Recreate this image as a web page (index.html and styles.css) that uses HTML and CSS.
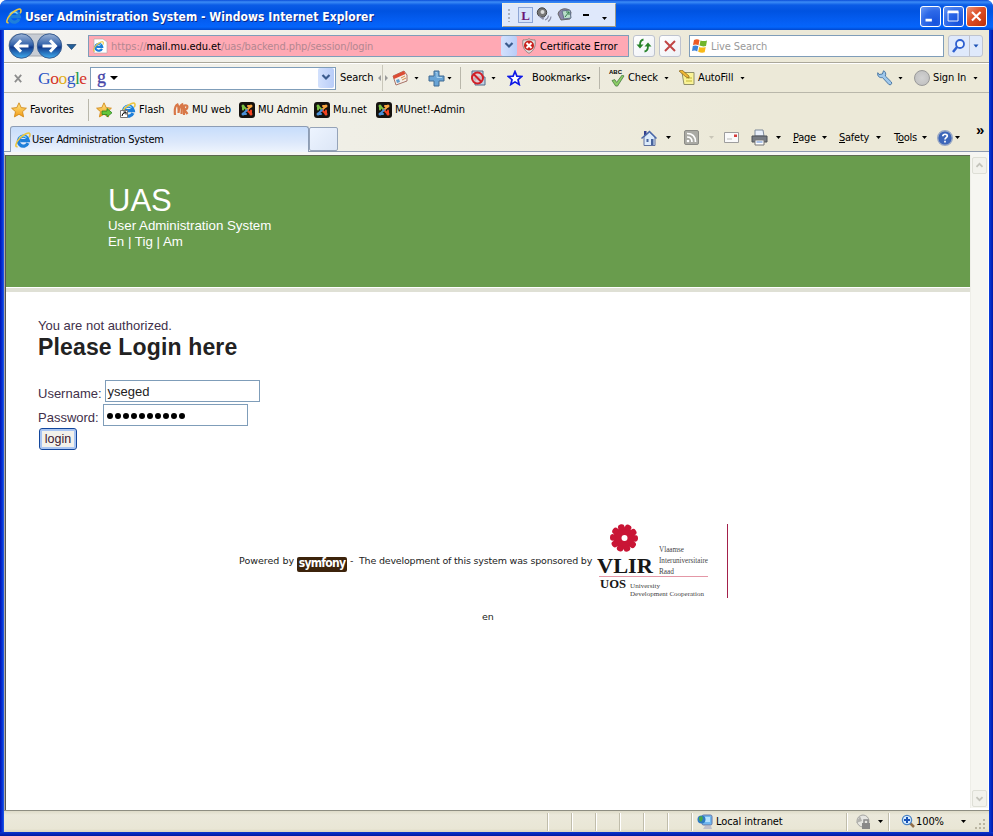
FILE: index.html
```
<!DOCTYPE html>
<html lang="en">
<head>
<meta charset="utf-8">
<title>User Administration System</title>
<link rel="stylesheet" href="styles.css">
</head>
<body>
<svg class="defs" width="0" height="0">
  <defs>
    <linearGradient id="blueBall" x1="0" y1="0" x2="0" y2="1"><stop offset="0" stop-color="#9db4d6"/><stop offset=".45" stop-color="#3564ac"/><stop offset=".55" stop-color="#123a8c"/><stop offset="1" stop-color="#41aef0"/></linearGradient>
    <linearGradient id="gold" x1="0" y1="0" x2="0" y2="1"><stop offset="0" stop-color="#ffe98a"/><stop offset="1" stop-color="#f39a12"/></linearGradient>
    <symbol id="ie" viewBox="0 0 16 16">
      <path d="M13 11.200A5 5 0 1 1 13.400 8.600H5.200" fill="none" stroke="#1e7fda" stroke-width="3.200"/>
      <path d="M4 6.400A4.600 4.600 0 0 1 11.500 5.600" fill="none" stroke="#7fd3fa" stroke-width="1.400"/>
      <path d="M2.600 14.600C-.4 15.600.6 10.400 5 6S14.800-.6 15 2.500c.1 1-.4 2-.9 2.700" fill="none" stroke="#ecc640" stroke-width="1.600"/>
    </symbol>
    <symbol id="star" viewBox="0 0 16 16"><path d="M8 .8l2.200 4.800 5.200.6-3.900 3.500 1.100 5.200L8 12.300l-4.600 2.600 1.100-5.200L.6 6.200l5.200-.6z" fill="url(#gold)" stroke="#d18a1c" stroke-width=".9"/></symbol>
    <symbol id="joomla" viewBox="0 0 16 16">
      <rect width="16" height="16" rx="3" fill="#15120f"/>
      <g fill="none" stroke-width="2" stroke-linecap="round"><path d="M4.500 4.500L8 8" stroke="#7ac143"/><path d="M11.500 4.500L8 8" stroke="#f9a541"/><path d="M11.500 11.500L8 8" stroke="#f44321"/><path d="M4.500 11.500L8 8" stroke="#4a91d8"/><path d="M4 5v2.500" stroke="#7ac143"/><path d="M11 4H9" stroke="#f9a541"/><path d="M12 11V8.500" stroke="#f44321"/><path d="M5 12h2" stroke="#4a91d8"/></g>
      <g><circle cx="4" cy="4" r="1.500" fill="#7ac143"/><circle cx="12" cy="4" r="1.500" fill="#f9a541"/><circle cx="12" cy="12" r="1.500" fill="#f44321"/><circle cx="4" cy="12" r="1.500" fill="#4a91d8"/></g>
    </symbol>
  </defs>
</svg>

<div class="window">
  <header class="titlebar">
    <svg class="i16"><use href="#ie"/></svg>
    <h1 class="title">User Administration System - Windows Internet Explorer</h1>
    <div class="langbar">
      <span class="grip"></span>
      <span class="lang">L</span>
      <svg class="lang-icon" viewBox="0 0 16 16"><circle cx="6" cy="5.500" r="4.700" fill="#777" stroke="#444"/><circle cx="6.500" cy="5" r="2" fill="#ddd"/><path d="M3 9l4 3 1-2M9 13q3-1 3.500-4.500M12 14.500q2.500-1 3-5" fill="none" stroke="#8b8fa8" stroke-width="1.200"/></svg>
      <svg class="lang-icon" viewBox="0 0 16 16"><path d="M1 7C2 1 11 0 14 5l-1 7-9 1z" fill="#8b86a9" stroke="#666"/><path d="M5 4l8-1 1 8-7 1z" fill="#b9dfc9" stroke="#63708b"/><path d="M8 10l4-5M9 5h3v3" stroke="#347b4c" fill="none"/></svg>
      <span class="lang-min"></span>
      <span class="arrow"></span>
    </div>
    <span></span>
    <span class="cap"><svg viewBox="0 0 21 21"><path d="M5 14.500h7" stroke="#fff" stroke-width="3"/></svg></span>
    <span class="cap"><svg viewBox="0 0 21 21"><path d="M4.500 5.500h11v10h-11z" fill="none" stroke="#fff"/><path d="M4 5.500h12" stroke="#fff" stroke-width="3"/></svg></span>
    <span class="cap close"><svg viewBox="0 0 21 21"><path d="M5.500 5.500l9.500 9.500M15 5.500L5.500 15" stroke="#fff" stroke-width="2.300"/></svg></span>
  </header>

  <div class="frame">
    <nav class="addressrow">
      <svg class="nav" viewBox="0 0 70 28">
        <rect x="1" y="2" width="52" height="22" rx="11" fill="#c7ccd4" stroke="#a4a8ae"/>
        <g stroke="#395d91"><circle cx="13.500" cy="14" r="12.200" fill="url(#blueBall)"/><circle cx="41.500" cy="14" r="12.200" fill="url(#blueBall)"/></g>
        <path d="M20.500 14H8M13 8.300L7.500 14l5.500 5.700M34.500 14H47M42 8.300l5.500 5.700-5.500 5.700" fill="none" stroke="#fff" stroke-width="3"/>
        <path d="M59 12.500h9l-4.500 5z" fill="#235f9a" stroke="#173f6c" stroke-width=".7"/>
      </svg>
      <div class="address">
        <svg class="pageicon" viewBox="0 0 16 16"><path d="M2 1h9l4 3v11H2z" fill="#fff" stroke="#aaa" stroke-width=".6"/><use href="#ie" x="1" y="3" width="11" height="11"/></svg>
        <span class="url ui">https://<b>mail.mu.edu.et</b><i>/uas/backend.php/session/login</i></span>
        <span class="drop"><svg viewBox="0 0 16 18"><path d="M4.500 7L8 10.500 11.500 7" fill="none" stroke="#3b5b8d" stroke-width="2.200"/></svg></span>
        <svg class="shield" viewBox="0 0 16 16"><path d="M8 .7c2 1.300 4 1.300 6 1.200 1 6-.6 10.500-6 13.500C2.600 12.400 1 7.900 2 1.900c2 .1 4 .1 6-1.200z" fill="#dedede" stroke="#9a8585"/><circle cx="8" cy="7.500" r="5" fill="#c7201c"/><path d="M5.500 5l5 5m0-5l-5 5" stroke="#fff" stroke-width="2"/></svg>
        <span class="ui cert">Certificate Error</span>
      </div>
      <span class="btn"><svg viewBox="0 0 20 20"><path d="M9.500 3.500Q6 4 6 9v1M10.500 15.500q3.500-.5 3.500-5.500V9" fill="none" stroke="#27832a" stroke-width="1.800"/><path d="M2.500 8.500h7L6 12.500zM10.500 10.500h7L14 6.500z" fill="#27832a"/></svg></span>
      <span class="btn"><svg viewBox="0 0 20 20"><path d="M5 5l10 10M15 5L5 15" stroke="#c04545" stroke-width="2"/></svg></span>
      <div class="search"><svg class="i16" viewBox="0 0 16 16"><path d="M2 2q3-1.500 5.500 0L6.500 7.300Q4 6 1 7z" fill="#ee5a24"/><path d="M8.500 2.600q3 1 6.500 0L14 8q-3 1-6.500-.4z" fill="#70b52c"/><path d="M.8 8q3-1 5.500.3L5.200 13.500Q3 12 0 13z" fill="#3e83d8"/><path d="M7.200 9q3 1 6.500 0l-1 5.300q-3 1-6.500-.5z" fill="#f7b918"/></svg><span class="ui live">Live Search</span></div>
      <div class="btn wide"><svg viewBox="0 0 34 20"><path d="M20.500 0v20" stroke="#bfc3ce"/><circle cx="11" cy="8" r="4" fill="#eef5ff" stroke="#2f60d0" stroke-width="1.800"/><path d="M8 11l-4 5" stroke="#2f60d0" stroke-width="2.500"/><path d="M24.500 8.500h5l-2.500 3z" fill="#1a50b5"/></svg></div>
    </nav>

    <nav class="googlerow">
      <svg class="xicon" viewBox="0 0 10 10"><path d="M1 1l7 8M8 1L1 9" stroke="#8d8d8d" stroke-width="2"/></svg>
      <span class="google"><b>G</b><b>o</b><b>o</b><b>g</b><b>l</b><b>e</b></span>
      <div class="gbox"><span class="g">g</span><span class="arrow big"></span><span class="drop"><svg viewBox="0 0 16 18"><path d="M4.500 7L8 10.500 11.500 7" fill="none" stroke="#3b5b8d" stroke-width="2.200"/></svg></span></div>
      <span class="ui">Search</span>
      <svg class="split" viewBox="0 0 10 26"><path d="M4.500 0v26" stroke="#c9c7ba"/><path d="M0 13l3-3v6zM10 13l-3-3v6z" fill="#999"/></svg>
      <svg class="i16" viewBox="0 0 16 16"><path d="M1 6l11-5 3 4v6L4 15z" fill="#f5eee7" stroke="#a77368"/><path d="M1 6l11-5 1.500 3L2 9z" fill="#dc4c34"/><path d="M4 10l3-1 1 3-3 1z" fill="#649dcc"/><path d="M9 8l4-2m-3 4l4-2" stroke="#d68a45"/></svg>
      <span class="arrow"></span>
      <svg class="i17" viewBox="0 0 17 17"><path d="M6 1h5v5h5v5h-5v5H6v-5H1V6h5z" fill="#69a4d5" stroke="#416b92"/><path d="M7.500 2.500h1.500v5h5" fill="none" stroke="#aad3ee"/></svg>
      <span class="arrow"></span>
      <span class="sep"></span>
      <svg class="i16" viewBox="0 0 16 16"><path d="M2 1h11v8H2zM5 7h10v8H5z" fill="#bfd2e6" stroke="#546c89"/><circle cx="7.500" cy="8" r="5.500" fill="#f4cccc" fill-opacity=".65" stroke="#d11f26" stroke-width="2"/><path d="M3.500 4l8 8" stroke="#d11f26" stroke-width="2"/></svg>
      <span class="arrow"></span>
      <svg class="i16" viewBox="0 0 16 16"><path d="M8 1.500l1.900 4.600 4.800.4-3.700 3.200 1.200 4.800L8 11.900l-4.200 2.600L5 9.700 1.300 6.500l4.800-.4z" fill="#fff" stroke="#0e18e6" stroke-width="1.700"/></svg>
      <span class="ui">Bookmarks</span>
      <span class="arrow"></span>
      <span class="sep"></span>
      <span class="abc">ABC<svg viewBox="0 0 15 13"><path d="M1 6l3-1 2 3L12 0l2 1-7 11H5z" fill="#8bcc65" stroke="#40753a" stroke-width=".8"/></svg></span>
      <span class="ui">Check</span>
      <span class="arrow"></span>
      <svg class="i16" viewBox="0 0 16 16"><path d="M3 2.500h12v12H5z" fill="#faf396" stroke="#90906a"/><path d="M7 8h6m-6 3h6" stroke="#c2b735"/><path d="M0 1l3-1 7 6v2L7 7z" fill="#efb735" stroke="#85631c" stroke-width=".7"/></svg>
      <span class="ui autofill">AutoFill</span>
      <span class="arrow"></span>
      <svg class="i16" viewBox="0 0 16 16"><path d="M6.500.8L5.400 4 2 4.500.8 2.700C0 6 2.500 8.300 5.400 7.500l6.500 7c1.800 1 3.500-.7 2.500-2.500L8.300 6C9.300 3.500 8.500 1.500 6.500.8z" fill="#9fc8ec" stroke="#416f9e" stroke-width=".9"/></svg>
      <span class="arrow"></span>
      <span class="user"></span>
      <span class="ui">Sign In</span>
      <span class="arrow"></span>
    </nav>

    <nav class="favrow">
      <svg class="i16"><use href="#star"/></svg>
      <span class="ui">Favorites</span>
      <span class="sep"></span>
      <svg class="i16" viewBox="0 0 16 16"><use href="#star"/><path d="M6 9h5V6.500l5 4.300-5 4.200v-2.500H6z" fill="#63c63b" stroke="#2c8425" stroke-width=".8"/></svg>
      <svg class="i16" viewBox="0 0 16 16"><use href="#ie"/><path d="M.5 8.500h7v7h-7z" fill="#fff" stroke="#777"/><path d="M2 14q0-3 3.500-3.500M3.500 10H6v2.500" fill="none" stroke="#000"/></svg>
      <span class="ui">Flash</span>
      <svg class="i16" viewBox="0 0 16 16"><path d="M2 13Q1 4 4.500 2.500 6 5 5.500 11 6 4 9 2.500L8.500 12M11 13V3.500Q15.500 2.500 14 6.500L11.500 8l3 4" fill="none" stroke="#d87747" stroke-width="2.200"/></svg>
      <span class="ui">MU web</span>
      <svg class="i16"><use href="#joomla"/></svg>
      <span class="ui">MU Admin</span>
      <svg class="i16"><use href="#joomla"/></svg>
      <span class="ui">Mu.net</span>
      <svg class="i16"><use href="#joomla"/></svg>
      <span class="ui">MUnet!-Admin</span>
    </nav>

    <nav class="tabrow">
      <div class="tab"><svg class="i16"><use href="#ie"/></svg><span class="ui">User Administration System</span></div>
      <div class="newtab"></div>
      <svg class="i16" viewBox="0 0 16 16"><path d="M3 1h2.500v4H3z" fill="#34408d"/><path d="M3 7v8.500h11V7L8.500 2z" fill="#dcebfa" stroke="#60719e"/><path d="M.5 8.500l8-7 7 7" fill="none" stroke="#4967a9" stroke-width="1.500"/><path d="M5.500 9h2v3h-2zM10 9h2.500v6H10z" fill="#48649d"/></svg>
      <span class="arrow"></span>
      <svg class="i15" viewBox="0 0 15 15"><rect x=".5" y=".5" width="14" height="14" rx="1.500" fill="#aaaaa4" stroke="#8b8b86"/><g fill="none" stroke="#fff" stroke-width="1.700"><path d="M3 7q5 0 5 5M3 3.500q8.500 0 8.500 8.500"/></g><circle cx="4" cy="11" r="1.300" fill="#fff"/></svg>
      <span class="arrow pale"></span>
      <svg class="i15" viewBox="0 0 15 15"><path d="M.5 2.500h14v10H.5z" fill="#fafafa" stroke="#9d9d9d"/><path d="M10 4.500h3v2.500h-3z" fill="#d63b3b"/><path d="M3 9h5" stroke="#bbb"/></svg>
      <svg class="i17" viewBox="0 0 17 17"><path d="M4 1h8l1 6H4z" fill="#e9f0fb" stroke="#7d899b"/><path d="M1 7h15v6H1z" fill="#777c84" stroke="#4c5057"/><path d="M4 11h9v5H4z" fill="#fff" stroke="#777"/><path d="M5.500 13h6" stroke="#5785d0"/></svg>
      <span class="arrow"></span>
      <span class="ui"><u>P</u>age</span>
      <span class="arrow"></span>
      <span class="ui"><u>S</u>afety</span>
      <span class="arrow"></span>
      <span class="ui">T<u>o</u>ols</span>
      <span class="arrow"></span>
      <svg class="i16" viewBox="0 0 16 16"><circle cx="8" cy="8" r="7.300" fill="#3d66b9" stroke="#9aa9c5" stroke-width="1.400"/><path d="M5.800 6.200C6 3.500 10.600 3.700 10.300 6.200 10.100 7.700 8 7.800 8 9.600M8 10.800v1.800" fill="none" stroke="#fff" stroke-width="1.700"/></svg>
      <span class="arrow"></span>
      <span class="more">»</span>
    </nav>

    <div class="viewport">
      <main class="page">
        <div class="banner">
          <h2>UAS</h2>
          <p>User Administration System</p>
          <p class="langs">En | Tig | Am</p>
        </div>
        <section class="login">
          <p class="message">You are not authorized.</p>
          <h3>Please Login here</h3>
          <label class="field user-field"><span>Username:</span><span class="input user-input">yseged</span></label>
          <label class="field"><span>Password:</span><span class="input pass-input"><svg viewBox="0 0 80 8"><path d="M3 4h72.100" stroke="#000" stroke-width="6" stroke-linecap="round" stroke-dasharray="0 8"/></svg></span></label>
          <button class="submit">login</button>
        </section>
        <footer class="footer">
          <div class="credits">
            <span class="powered">Powered by</span>
            <span class="symfony">symfony</span>
            <span class="sponsor">-&nbsp; The development of this system was sponsored by</span>
            <svg class="vlir" viewBox="0 0 132 74">
              <circle cx="27" cy="14" r="10.500" fill="#c91535"/>
              <circle cx="27" cy="14" r="11" fill="none" stroke="#c91535" stroke-width="6" stroke-linecap="round" stroke-dasharray=".7 6.211"/>
              <circle cx="27.500" cy="14" r="3" fill="#fff"/>
              <text x="0" y="48.500" class="vlir-name" textLength="56" lengthAdjust="spacingAndGlyphs">VLIR</text>
              <text x="3" y="64" class="uos" textLength="26" lengthAdjust="spacingAndGlyphs">UOS</text>
              <path d="M2 52.500h109" stroke="#e497a6"/>
              <g class="vlir-small">
                <text x="62" y="28" textLength="25" lengthAdjust="spacingAndGlyphs">Vlaamse</text>
                <text x="62" y="39" textLength="49" lengthAdjust="spacingAndGlyphs">Interuniversitaire</text>
                <text x="62" y="50" textLength="15" lengthAdjust="spacingAndGlyphs">Raad</text>
                <text x="33" y="64" textLength="30" lengthAdjust="spacingAndGlyphs">University</text>
                <text x="33" y="72" textLength="74" lengthAdjust="spacingAndGlyphs">Development Cooperation</text>
              </g>
              <rect x="130" y="0" width="1" height="74" fill="#a3204a"/>
            </svg>
          </div>
          <p class="culture">en</p>
        </footer>
      </main>
      <div class="scrollbar">
        <span><svg viewBox="0 0 15 17"><path d="M4 10l3.500-3.500L11 10" fill="none" stroke="#c3c3ba" stroke-width="2"/></svg></span>
        <span><svg viewBox="0 0 15 17"><path d="M4 7l3.500 3.500L11 7" fill="none" stroke="#c3c3ba" stroke-width="2"/></svg></span>
      </div>
    </div>

    <footer class="status">
      <span class="cell"></span><span class="cell"></span><span class="cell"></span><span class="cell"></span><span class="cell"></span><span class="cell"></span>
      <div class="cell zone"><svg class="i16" viewBox="0 0 16 16"><rect x="5" y="1" width="10" height="10" rx="1.500" fill="#71b7ef" stroke="#6476a7"/><path d="M7 3h6v5H7z" fill="#b5e2ff"/><path d="M8 12h6l1 3H6z" fill="#c0bfca"/><circle cx="4.500" cy="5.500" r="4" fill="#2d7ac3"/><path d="M2 3l3-1 1 3-2 3-2-2z" fill="#47a747"/></svg><span class="ui">Local intranet</span></div>
      <div class="cell protect"><svg class="i16" viewBox="0 0 16 16"><circle cx="8" cy="7" r="6" fill="#e5e5e1" stroke="#a3a3a0"/><path d="M1 9l4-7 2 5z" fill="#b2b2ae"/><path d="M7 9h8v6H7z" fill="#888"/><path d="M9 9V6h4v3" fill="none" stroke="#888" stroke-width="1.500"/></svg><span class="arrow"></span></div>
      <div class="cell zoom"><svg class="i16" viewBox="0 0 16 16"><path d="M9 9l4 4" stroke="#93704c" stroke-width="2.500"/><circle cx="6" cy="6" r="4.600" fill="#d7edff" stroke="#4a83c5" stroke-width="1.300"/><path d="M6 3v6M3 6h6" stroke="#1952b5" stroke-width="2"/></svg><span class="ui">100%</span><span class="arrow"></span><svg class="sizer" viewBox="0 0 12 12"><path d="M9 1h2v2H9zM5 5h2v2H5zM9 5h2v2H9zM1 9h2v2H1zM5 9h2v2H5zM9 9h2v2H9z" fill="#b9b5a2"/></svg></div>
    </footer>
  </div>
</div>
</body>
</html>
```
FILE: styles.css
```
* { box-sizing: border-box; }
body { margin: 0; background: #fff; overflow: hidden; font-family: "Liberation Sans", Arial, sans-serif; }
h1, h2, h3, p { margin: 0; }
svg { display: block; }
.defs { position: absolute; }
.ui { font: 11px/14px "DejaVu Sans Condensed", "DejaVu Sans", sans-serif; font-stretch: condensed; letter-spacing: -0.25px; color: #000; white-space: nowrap; }
.i16 { width: 16px; height: 16px; }
.i15 { width: 15px; height: 15px; }
.i17 { width: 17px; height: 17px; }
.arrow { width: 5px; height: 3px; background: #000; clip-path: polygon(0 0, 100% 0, 50% 100%); }
.arrow.big { width: 8px; height: 4px; }
.arrow.pale { background: #c9c6b8; }
.sep { width: 1px; height: 22px; background: #b9b7ab; }

.window { width: 993px; height: 836px; background: linear-gradient(180deg, transparent 832px, #0a35cf 832px, #0019a0 836px), linear-gradient(90deg, #0012b4, #0a3fe0 3px, #2a62ea 4px, #0a3fe0 989px, #0019a8 993px); border-radius: 7px 7px 0 0; overflow: hidden; }
.titlebar { height: 30px; padding: 2px 0 0 6px; display: grid; grid-template-columns: 19px 477px 114px 304px 23px 23px 21px; align-items: center; background: linear-gradient(180deg, #0a4dd8 0, #3c8cf6 2px, #0b5ce6 5px, #0053e1 11px, #0560f6 23px, #0465fb 27px, #0048d0 30px); }
.title { font: bold 12px/16px "DejaVu Sans Condensed", sans-serif; letter-spacing: 0.05px; color: #fff; text-shadow: 1px 1px #0a2a8c; white-space: nowrap; padding-top: 2px; }
.langbar { height: 24px; display: grid; grid-template-columns: 15px 19px 21px 25px 19px 5px; align-items: center; padding-left: 5px; margin-top: -2px; background: #dfe8fb; border: 1px solid #f3f0e1; border-right-color: #9a9a8d; border-bottom-color: #9a9a8d; }
.grip { width: 2px; height: 13px; background: repeating-linear-gradient(180deg, #aab0bd 0 2px, transparent 2px 4px); }
.lang { width: 15px; height: 16px; margin-left: -5px; border: 1px solid #8da5d5; background: #d5e2fb; font: bold 13px/15px "Liberation Serif", serif; color: #6c1677; text-align: center; }
.lang-icon { width: 16px; height: 16px; margin-left: -6px; }
.lang-min { width: 6px; height: 2px; background: #000; margin-left: -5px; }
.langbar .arrow { margin: 7px 0 0 -5px; }
.cap { width: 21px; height: 21px; border: 1px solid #fff; border-radius: 3px; background: radial-gradient(circle at 75% 80%, #1552dd, #2e69e8 55%, #6d9cf5); }
.cap svg { width: 19px; height: 19px; }
.cap.close { background: linear-gradient(135deg, #eb9479, #dd4e25 45%, #bd3008); }

.frame { width: 985px; height: 802px; margin-left: 4px; background: linear-gradient(90deg, #f5f4f1, #f0efe6 35%, #ece9d8 75%); overflow: hidden; }
.addressrow { height: 33px; padding-left: 4px; display: grid; grid-template-columns: 80px 545px 26px 30px 259px 35px; align-items: center; border-bottom: 1px solid #aaa79a; }
.nav { width: 70px; height: 28px; }
.address { width: 541px; height: 22px; border: 1px solid #7f9db9; background: #ffa9b4; display: grid; grid-template-columns: 19px 393px 20px 18px 89px; align-items: center; padding-left: 3px; }
.address .ui { padding-top: 2px; }
.pageicon { width: 16px; height: 16px; }
.address .url { color: #b38790; letter-spacing: 0; }
.url b { color: #000; font-weight: normal; letter-spacing: -.05px; }
.url i { font-style: normal; letter-spacing: -.1px; }
.drop { width: 16px; height: 20px; border-radius: 2px; background: linear-gradient(90deg, #d3e1fd, #b9cdf8); margin-left: -3px; }
.drop svg { width: 16px; height: 18px; }
.shield { width: 16px; height: 16px; margin-left: -3px; }
.address .cert { margin-left: -2px; letter-spacing: -.07px; }
.btn { width: 22px; height: 22px; border: 1px solid #bec3cf; border-radius: 3px; background: linear-gradient(135deg, #fff, #eef1f6); }
.btn svg { width: 20px; height: 20px; }
.btn.wide { width: 35px; background: #dfe9fb; }
.btn.wide svg { width: 34px; }
.search { width: 255px; height: 22px; background: #fff; border: 1px solid #7f9db9; display: flex; align-items: center; padding-left: 2px; gap: 3px; }
.search .live { color: #999; letter-spacing: -.1px; padding-top: 2px; }

.googlerow { height: 30px; padding-left: 10px; border-top: 1px solid #fff; border-bottom: 1px solid #b9b7aa; display: grid; grid-template-columns: 24px 52px 250px 38px 14px 22px 14px 19px 13px 10px 21px 16px 25px 54px 13px 10px 19px 36px 15px 19px 42px 137px 21px 16px 19px 40px 5px; align-items: center; }
.xicon { width: 9px; height: 9px; }
.google { font: 17.5px/20px "Liberation Serif", serif; letter-spacing: -.5px; white-space: nowrap; }
.google b { font-weight: normal; color: #2c55c5; }
.google b:nth-child(2), .google b:nth-child(6) { color: #d53328; }
.google b:nth-child(3) { color: #e2ae18; }
.google b:nth-child(5) { color: #239a45; }
.gbox { width: 246px; height: 23px; display: flex; align-items: center; background: #fff; border: 1px solid #7f9db9; padding-left: 6px; }
.g { font: 18px/16px "Liberation Serif", serif; color: #4746a8; width: 13px; height: 18px; -webkit-text-stroke: .3px #4746a8; }
.gbox .drop { margin-left: auto; margin-right: 1px; }
.split { width: 10px; height: 26px; }
.googlerow .ui { letter-spacing: -.1px; }
.abc { font: bold 6px/6px "Liberation Sans", sans-serif; width: 17px; height: 18px; }
.abc svg { width: 14px; height: 12px; margin-left: 2px; }
.user { width: 16px; height: 16px; border: 1px solid #999; border-radius: 50%; background: radial-gradient(#d2d2d2, #bdbdbd); }

.favrow { height: 31px; padding: 2px 0 0 7px; display: grid; grid-template-columns: 19px 58px 8px 24px 19px 34px 19px 47px 19px 56px 19px 43px 19px 80px; align-items: center; }
.favrow .ui { letter-spacing: -.08px; }
.tabrow { height: 28px; padding: 0 0 0 6px; display: grid; grid-template-columns: 299px 332px 25px 18px 25px 15px 27px 25px 17px 29px 17px 37px 18px 28px 15px 18px 21px 12px; align-items: center; border-bottom: 1px solid #8d9aae; }
.tab { width: 299px; height: 26px; margin: 2px 0 -1px; display: flex; align-items: center; gap: 1px; padding-left: 4px; border: 1px solid #8d9db5; border-bottom: 0; border-radius: 3px 3px 0 0; background: linear-gradient(180deg, #c7ddfb, #dce8fb 60%, #eef4fd); }
.newtab { width: 29px; height: 24px; margin: 3px 0 0; border: 1px solid #95a3b8; border-radius: 2px; background: linear-gradient(135deg, #edf4ff, #dce6f6); }
.more { font: bold 15px/12px "Liberation Sans", sans-serif; margin-top: -16px; }

.viewport { height: 658px; display: flex; background: #fff; border-top: 3px solid #f6f6f3; border-left: 1px solid #aaa; }
.page { width: 965px; border-left: 1px solid #555; border-top: 1px solid #5d694f; background: #fff; }
.banner { height: 131px; margin-bottom: 1px; padding: 28px 0 0 102px; background: #699c4d; color: #fff; box-shadow: 0 1px #fff, 0 5px #dfe0d5; font-size: 13.3px; line-height: 16px; }
.banner h2 { font-size: 31px; line-height: 34px; font-weight: normal; letter-spacing: 0; }
.login { padding: 30px 0 0 32px; height: 230px; color: #41304a; font-size: 13px; letter-spacing: 0; }
.message { line-height: 16px; }
.login h3 { font-size: 23px; line-height: 27px; color: #222; letter-spacing: .15px; margin-bottom: 18px; }
.field { display: flex; align-items: center; height: 24px; gap: 4px; }
.user-field { gap: 3px; }
.field > span:first-child { padding-top: 4px; letter-spacing: 0; }
.input { height: 22px; border: 1px solid #7f9db9; background: #fff; padding: 0 2px; line-height: 21px; color: #222; }
.user-input { width: 155px; }
.pass-input { width: 145px; }
.pass-input svg { width: 80px; height: 8px; margin: 7px 0 0 1px; }
.submit { width: 38px; height: 22px; margin: 1px 0 0 1px; padding: 0; border: 1px solid #12469c; border-radius: 3px; box-shadow: inset 0 0 0 2px #a9c5f2; background: #f2f1eb; font: 12.5px/18px "Liberation Sans", sans-serif; color: #3a1631; display: block; }
.footer { padding: 6px 0 0 233px; font: 9.5px/14px "DejaVu Sans", sans-serif; color: #222; }
.credits { display: grid; grid-template-columns: 58px 53px 247px 132px; align-items: center; height: 74px; white-space: nowrap; }
.powered { letter-spacing: 0; }
.symfony { width: 50px; height: 15px; margin-top: 7px; background: #3c230b; border-radius: 2px; color: #fff; font: bold 12px/13px "DejaVu Sans Condensed", sans-serif; letter-spacing: -.7px; text-align: center; }
.sponsor { letter-spacing: -.18px; }
.vlir { width: 132px; height: 74px; }
.vlir-name { font: bold 22px "Liberation Serif", serif; fill: #171717; }
.uos { font: bold 12px "Liberation Serif", serif; fill: #171717; }
.vlir-small text { font: 7.5px "Liberation Serif", serif; fill: #444; }
.vlir-small text:nth-child(n+4) { font-size: 7px; }
.culture { margin: 12px 0 0 243px; }
.scrollbar { width: 18px; height: 653px; padding: 2px 1px 1px; display: flex; flex-direction: column; justify-content: space-between; background: #f6f6f1; border-left: 1px solid #eeeee8; }
.scrollbar span { width: 15px; height: 17px; border: 1px solid #dedfd6; border-radius: 2px; background: #f2f2ec; }
.scrollbar svg { width: 13px; height: 15px; }

.status { height: 22px; padding-left: 543px; display: grid; grid-template-columns: repeat(6, 24px) 155px 42px 100px; align-items: center; border-top: 1px solid #8e8e82; background: linear-gradient(180deg, #dedbc9, #ebe9db 4px, #e9e6d5 18px, #d8d4bf); }
.status .ui { letter-spacing: -.1px; }
.cell { height: 18px; border-left: 1px solid #c0bdab; box-shadow: inset 1px 0 #fff; }
.zone { display: flex; align-items: center; gap: 3px; padding-left: 5px; }
.protect { display: flex; align-items: center; gap: 7px; padding-left: 8px; }
.zoom { display: grid; grid-template-columns: 15px 45px 13px 12px; align-items: center; padding-left: 12px; }
.sizer { width: 12px; height: 12px; margin-top: 5px; }
```
